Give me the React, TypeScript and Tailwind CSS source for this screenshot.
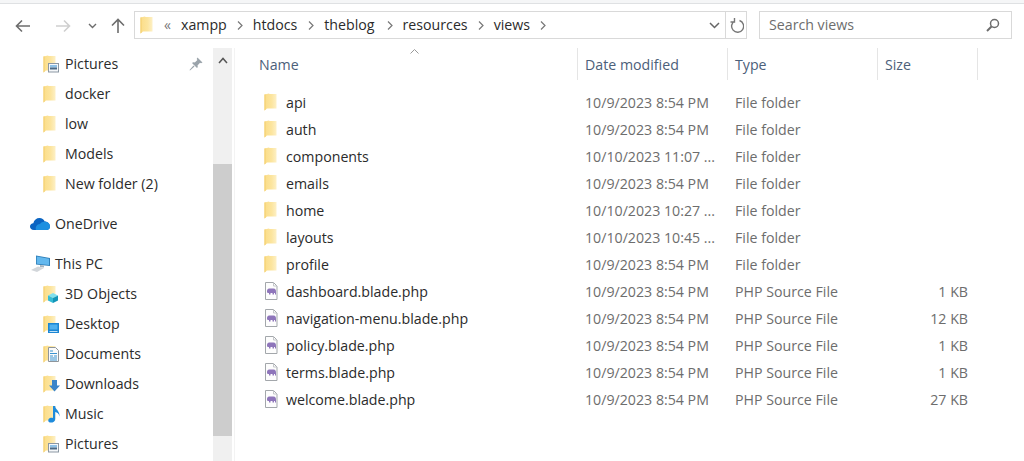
import React from "react";

const FONT = "font-['Open_Sans','Noto_Sans',sans-serif]";

function Folder() {
  return (
    <svg width="14" height="18" viewBox="0 0 14 18" className="block">
      <defs>
        <linearGradient id="fg" x1="0" y1="0" x2="1" y2="0">
          <stop offset="0" stopColor="#fbdd88" />
          <stop offset="0.6" stopColor="#fce59f" />
          <stop offset="1" stopColor="#fdf0c6" />
        </linearGradient>
      </defs>
      <path d="M0.5 1.5 L5 0.5 L5.5 1 H12.5 V15.5 H3 L0.5 17.5 Z" fill="url(#fg)" />
      <path d="M0.5 1.5 L1.5 1.3 V16.7 L0.5 17.5 Z" fill="#f3cd6e" />
    </svg>
  );
}

function Overlay({ kind }: { kind: string }) {
  if (kind === "pictures")
    return (
      <svg width="11" height="10" viewBox="0 0 11 10">
        <rect x="0.5" y="0.5" width="10" height="8.5" fill="#f5f7f9" stroke="#8b97a3" />
        <rect x="2" y="2" width="7" height="2.5" fill="#8fc1e6" />
        <rect x="2" y="4.5" width="7" height="2" fill="#4c6a85" />
      </svg>
    );
  if (kind === "3d")
    return (
      <svg width="12" height="12" viewBox="0 0 12 12">
        <path d="M6 1 L11 3.5 L6 6 L1 3.5 Z" fill="#7fe0ee" />
        <path d="M1 3.5 L6 6 V11 L1 8.5 Z" fill="#35bcd6" />
        <path d="M11 3.5 L6 6 V11 L11 8.5 Z" fill="#1295b8" />
      </svg>
    );
  if (kind === "desktop")
    return (
      <svg width="11" height="10" viewBox="0 0 11 10">
        <rect x="0" y="0" width="11" height="10" fill="#1b86d4" />
        <rect x="1.5" y="1.5" width="8" height="5" fill="#4fb0ee" />
        <rect x="1.5" y="8" width="8" height="1" fill="#bfe2f7" />
      </svg>
    );
  if (kind === "documents")
    return (
      <svg width="11" height="15" viewBox="0 0 11 15">
        <path d="M0.5 0.5 H7.5 L10.5 3.5 V14.5 H0.5 Z" fill="#fafafa" stroke="#8e959b" />
        <path d="M2 4 H5 M2 6.5 H9 M2 9 H5 M6 9 H9 M2 11 H9 M2 13 H9" stroke="#3a93cf" />
      </svg>
    );
  if (kind === "downloads")
    return (
      <svg width="11" height="12" viewBox="0 0 11 12">
        <path d="M3 0 H8 V5.5 H11 L5.5 11.5 L0 5.5 H3 Z" fill="#3b85c9" />
      </svg>
    );
  return (
    <svg width="12" height="17" viewBox="0 0 12 17">
      <path d="M5 0 H7.2 C7.2 3.5 12 4.5 11.5 10.5 C11 7.5 9 6.5 7.2 6 V13 C7.2 16 4 17 2 16.5 C-0.3 16 -0.3 13 2 12 C3 11.5 4 11.5 5 12 Z" fill="#1e8bdc" />
    </svg>
  );
}

function NavFolder({ kind }: { kind?: string }) {
  return (
    <span className="relative w-[17px] h-[18px] block">
      <Folder />
      {kind === "pictures" && <span className="absolute left-[5px] top-[8px]"><Overlay kind={kind} /></span>}
      {kind === "3d" && <span className="absolute left-[4px] top-[7px]"><Overlay kind={kind} /></span>}
      {kind === "desktop" && <span className="absolute left-[5px] top-[8px]"><Overlay kind={kind} /></span>}
      {kind === "documents" && <span className="absolute left-[5px] top-[2px]"><Overlay kind={kind} /></span>}
      {kind === "downloads" && <span className="absolute left-[6px] top-[5px]"><Overlay kind={kind} /></span>}
      {kind === "music" && <span className="absolute left-[5px] top-[1px]"><Overlay kind={kind} /></span>}
    </span>
  );
}

function NavItem({ label, kind, pin }: { label: string; kind?: string; pin?: boolean }) {
  return (
    <div className="h-[30px] pl-[43px] pr-[10px] flex items-center gap-[5px] text-[#2b2b2b]">
      <NavFolder kind={kind} />
      <span>{label}</span>
      {pin && (
        <svg width="14" height="14" viewBox="0 0 14 14" className="ml-auto">
          <path d="M8.5 0.5 L13.5 5.5 L12 6.3 L11 5.8 L8.5 8.5 C9 10 8.7 10.5 8 11 L3 6 C3.7 5.3 4.5 5 5.8 5.5 L8.4 3 L7.7 2 Z M4.5 8.5 L5.5 9.5 L1 13.5 L0.5 13 Z" fill="#9aa3aa" />
        </svg>
      )}
    </div>
  );
}

function Scrollbar() {
  return (
    <div className="w-[19px] bg-[#f0f0f0] flex flex-col shrink-0">
      <div className="h-[24px] flex items-center justify-center">
        <svg width="10" height="7" viewBox="0 0 10 7"><path d="M1 6 L5 1.5 L9 6" fill="none" stroke="#555" strokeWidth="1.5" /></svg>
      </div>
      <div className="h-[92px]" />
      <div className="h-[272px] bg-[#cdcdcd]" />
    </div>
  );
}

function Sidebar() {
  return (
    <div className="w-[235px] shrink-0 flex border-r border-[#f3f3f3] h-[413px]">
      <div className="w-[213px] shrink-0 overflow-hidden pt-[1px]">
        <NavItem label="Pictures" kind="pictures" pin />
        <NavItem label="docker" />
        <NavItem label="low" />
        <NavItem label="Models" />
        <NavItem label="New folder (2)" />
        <div className="h-[10px]" />
        <div className="h-[30px] pl-[30px] flex items-center gap-[5px] text-[#2b2b2b]">
          <svg width="20" height="14" viewBox="0 0 20 14">
            <path d="M4 13 C1 13 0 11 0 9.5 C0 7.5 1.5 6.2 3.3 6.2 C4 3 6.5 1 9.5 1 C12 1 13.8 2.4 14.7 4.4 C17.5 4.4 20 6.5 20 9.5 C20 11.5 18.7 13 16.5 13 Z" fill="#0a64c2" />
            <path d="M6 13 C5 10 7 7 10 7 C11 5.5 13 4.6 14.7 4.8 C17.5 4.6 20 6.5 20 9.5 C20 11.5 18.7 13 16.5 13 Z" fill="#1c8fe0" />
          </svg>
          <span>OneDrive</span>
        </div>
        <div className="h-[10px]" />
        <div className="h-[30px] pl-[30px] flex items-center gap-[5px] text-[#2b2b2b]">
          <svg width="20" height="18" viewBox="0 0 20 18">
            <path d="M6 0.5 L20 3 V11 L6 9.5 Z" fill="#2f7fb8" />
            <path d="M6.8 1.6 L19 3.8 V10 L6.8 8.8 Z" fill="#63b8ee" />
            <path d="M10 10 L14 10.5 V12.5 L10 12 Z" fill="#a8b4bd" />
            <path d="M1 15 L8 11.5 L14 13 L7 17 Z" fill="#d2d6da" />
          </svg>
          <span>This PC</span>
        </div>
        <NavItem label="3D Objects" kind="3d" />
        <NavItem label="Desktop" kind="desktop" />
        <NavItem label="Documents" kind="documents" />
        <NavItem label="Downloads" kind="downloads" />
        <NavItem label="Music" kind="music" />
        <NavItem label="Pictures" kind="pictures" />
      </div>
      <Scrollbar />
    </div>
  );
}

function PhpIcon() {
  return (
    <svg width="14" height="18" viewBox="0 0 14 18" className="block">
      <path d="M1.5 0.5 H9.5 L13 4 V17.5 H1.5 Z" fill="#fdfdfd" stroke="#a3a7ab" />
      <path d="M9.5 0.5 V4 H13" fill="none" stroke="#c4c7ca" />
      <path d="M3 9 C3 7 4.5 6.5 6 6.5 H9.5 C11.5 6.5 12 8 12 10 V12.5 H11 V11 H10 V12.5 H8.5 V11 H6.5 V12.5 H5 V11 H4 C3 11 3 10 3 9 Z" fill="#8e75ba" />
    </svg>
  );
}

const rows = [
  ["api", "10/9/2023 8:54 PM", "File folder", ""],
  ["auth", "10/9/2023 8:54 PM", "File folder", ""],
  ["components", "10/10/2023 11:07 ...", "File folder", ""],
  ["emails", "10/9/2023 8:54 PM", "File folder", ""],
  ["home", "10/10/2023 10:27 ...", "File folder", ""],
  ["layouts", "10/10/2023 10:45 ...", "File folder", ""],
  ["profile", "10/9/2023 8:54 PM", "File folder", ""],
  ["dashboard.blade.php", "10/9/2023 8:54 PM", "PHP Source File", "1 KB"],
  ["navigation-menu.blade.php", "10/9/2023 8:54 PM", "PHP Source File", "12 KB"],
  ["policy.blade.php", "10/9/2023 8:54 PM", "PHP Source File", "1 KB"],
  ["terms.blade.php", "10/9/2023 8:54 PM", "PHP Source File", "1 KB"],
  ["welcome.blade.php", "10/9/2023 8:54 PM", "PHP Source File", "27 KB"],
];

function Crumb({ label, cls }: { label: string; cls?: string }) {
  return (
    <>
      <span className={`text-[#2b2b2b] ${cls ?? ""}`}>{label}</span>
      <svg width="6" height="9" viewBox="0 0 6 9" className="mx-[10px]"><path d="M1 0.5 L5 4.5 L1 8.5" fill="none" stroke="#777" strokeWidth="1.2" /></svg>
    </>
  );
}

function Toolbar() {
  return (
    <div className="h-[44px] flex items-start bg-white">
      <div className="w-[134px] h-[36px] relative shrink-0 flex items-center pt-[7px]">
        <svg width="16" height="14" viewBox="0 0 16 14" className="ml-[15px]"><path d="M15 7 H2 M7 1.5 L1.5 7 L7 12.5" fill="none" stroke="#6d6d6d" strokeWidth="1.6" /></svg>
        <svg width="16" height="14" viewBox="0 0 16 14" className="ml-[24px]"><path d="M1 7 H14 M9 1.5 L14.5 7 L9 12.5" fill="none" stroke="#cfcfcf" strokeWidth="1.6" /></svg>
        <svg width="9" height="6" viewBox="0 0 9 6" className="ml-[17px]"><path d="M1 1 L4.5 4.5 L8 1" fill="none" stroke="#6d6d6d" strokeWidth="1.4" /></svg>
        <svg width="14" height="16" viewBox="0 0 14 16" className="ml-[14px]"><path d="M7 15 V2 M1 7.5 L7 1.5 L13 7.5" fill="none" stroke="#6d6d6d" strokeWidth="1.6" /></svg>
      </div>
      <div className="mt-[7px] w-[613px] h-[28px] border border-[#d9d9d9] flex items-center pl-[5px] shrink-0">
        <Folder />
        <span className="ml-[10px] mr-[10px] text-[#777] text-[14px] leading-none">«</span>
        <Crumb label="xampp" />
        <Crumb label="htdocs" cls="pr-[1px]" />
        <Crumb label="theblog" cls="pr-[2px]" />
        <Crumb label="resources" />
        <Crumb label="views" />
        <svg width="11" height="7" viewBox="0 0 11 7" className="ml-auto mr-[5px]"><path d="M1 1 L5.5 5.5 L10 1" fill="none" stroke="#666" strokeWidth="1.5" /></svg>
        <div className="w-[21px] h-full border-l border-[#d9d9d9] flex items-center justify-center">
          <svg width="15" height="16" viewBox="0 0 15 16"><path d="M9.5 3 A6 6 0 1 1 5 3.3 M4.5 0.5 V4.5 H0.5" fill="none" stroke="#777" strokeWidth="1.4" transform="translate(1 0.5)" /></svg>
        </div>
      </div>
      <div className="ml-[12px] mt-[7px] w-[253px] h-[28px] border border-[#d9d9d9] flex items-center pl-[9px] pr-[11px] text-[#6d6d6d] shrink-0">
        <span>Search views</span>
        <svg width="14" height="14" viewBox="0 0 14 14" className="ml-auto"><circle cx="8.5" cy="5.5" r="4" fill="none" stroke="#6d6d6d" strokeWidth="1.5" /><path d="M5.5 8.5 L1 13" stroke="#6d6d6d" strokeWidth="2" /></svg>
      </div>
    </div>
  );
}

function Head({ w, label, pl }: { w: string; label: string; pl: string }) {
  return (
    <div className={`${w} ${pl} h-[32px] pt-[1px] flex items-center border-r border-[#e5e5e5] text-[#4c607a] shrink-0`}>{label}</div>
  );
}

function Main() {
  return (
    <div className="flex-1 min-w-0 relative">
      <svg width="9" height="5" viewBox="0 0 9 5" className="absolute left-[175px] top-[1px]"><path d="M0.5 4.5 L4.5 0.5 L8.5 4.5" fill="none" stroke="#999" /></svg>
      <div className="flex pl-[15px]">
        <Head w="w-[328px]" pl="pl-[9px]" label="Name" />
        <Head w="w-[150px]" pl="pl-[7px]" label="Date modified" />
        <Head w="w-[150px]" pl="pl-[7px]" label="Type" />
        <Head w="w-[100px]" pl="pl-[7px]" label="Size" />
      </div>
      <div className="mt-[9px] pl-[29px]">
        {rows.map((r) => (
          <div key={r[0]} className="h-[27px] flex items-center">
            <div className="w-[314px] flex items-center gap-[8px] text-[#2b2b2b] shrink-0">
              {r[3] ? <PhpIcon /> : <Folder />}
              <span>{r[0]}</span>
            </div>
            <div className="w-[150px] pl-[7px] text-[#6d6d6d] shrink-0 whitespace-nowrap">{r[1]}</div>
            <div className="w-[150px] pl-[7px] text-[#6d6d6d] shrink-0">{r[2]}</div>
            <div className="w-[90px] text-right text-[#6d6d6d] shrink-0">{r[3]}</div>
          </div>
        ))}
      </div>
    </div>
  );
}

export default function App() {
  return (
    <div className={`w-[1024px] h-[461px] overflow-hidden bg-white text-[14.2px] ${FONT}`}>
      <div className="h-[4px] bg-[#f5f6f7] border-b border-[#dfe1e3]" />
      <Toolbar />
      <div className="flex h-[413px]">
        <Sidebar />
        <Main />
      </div>
    </div>
  );
}
